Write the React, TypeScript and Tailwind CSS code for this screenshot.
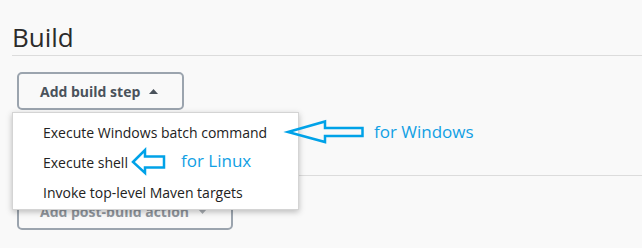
const items = [
  "Execute Windows batch command",
  "Execute shell",
  "Invoke top-level Maven targets",
];

function Caret({ up, color }: { up?: boolean; color: string }) {
  return (
    <svg width="9" height="5" viewBox="0 0 9 5" className="shrink-0">
      {up ? <polygon points="0,5 4.5,0 9,5" fill={color} /> : <polygon points="0,0 4.5,5 9,0" fill={color} />}
    </svg>
  );
}

export default function App() {
  return (
    <div
      className="relative w-[642px] h-[248px] overflow-hidden bg-[#f9f9f9] pl-3"
      style={{ fontFamily: '"Open Sans", "Noto Sans", sans-serif' }}
    >
      <h1 className="mt-[21px] text-[26px] leading-8 text-[#2b2b2b] border-b border-[#dcdcdc] pb-[2px]">Build</h1>

      <div className="relative ml-[5px] mt-4 w-fit">
        <button className="h-[38px] flex items-center gap-[9px] pl-[21px] pr-[24px] border-2 border-[#9ba4ae] rounded-[5px] text-[14px] font-bold text-[#4a525b]">
          Add build step
          <Caret up color="#4a525b" />
        </button>

        <div className="absolute z-10 left-[-5px] top-[40px] w-[287px] h-[98px] bg-white border border-[#d4d4d4] shadow-[0_2px_6px_rgba(0,0,0,0.25)] pt-[4px]">
          {items.map((t) => (
            <div key={t} className="h-[30px] flex items-center pl-[30px] text-[14px] text-[#222]">
              {t}
            </div>
          ))}
        </div>
      </div>

      <div className="mt-[65px] border-t border-[#dcdcdc]" />

      <button className="ml-[5px] mt-4 h-[38px] flex items-center gap-[9px] pl-[21px] pr-[24px] border-2 border-[#9ba4ae] rounded-[5px] text-[14px] font-bold text-[#8f959c]">
        Add post-build action
        <Caret color="#a8adb2" />
      </button>

      {/* annotations */}
      <svg className="absolute left-0 top-0 z-20 pointer-events-none" width="642" height="248">
        <polygon
          points="288,132 325,121.5 325,128 362.5,128 362.5,136 325,136 325,142"
          fill="none"
          stroke="#00a2e8"
          strokeWidth="2.5"
          strokeLinejoin="miter"
        />
        <polygon
          points="133,162 145,150 145,156.5 164,156.5 164,167.5 145,167.5 145,173"
          fill="none"
          stroke="#00a2e8"
          strokeWidth="2.5"
          strokeLinejoin="miter"
        />
      </svg>
      <div className="absolute z-20 left-[374px] top-[120px] text-[17px] leading-[24px] text-[#11a0e4]">for Windows</div>
      <div className="absolute z-20 left-[181px] top-[149px] text-[17px] leading-[24px] text-[#11a0e4]">for Linux</div>
    </div>
  );
}
